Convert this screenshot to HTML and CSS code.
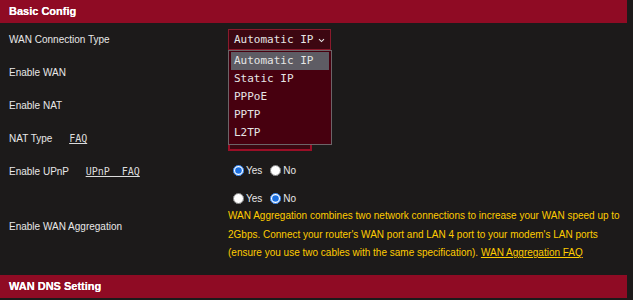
FILE: index.html
```html
<!DOCTYPE html>
<html>
<head>
<meta charset="utf-8">
<link rel="stylesheet" href="styles.css">
</head>
<body>
<div class="panel">
  <div class="section-head">Basic Config</div>
  <table class="form">
    <tr class="row">
      <th>WAN Connection Type</th>
      <td>
        <div class="select-wrap">
          <div class="select">
            <span class="sel-text">Automatic IP</span>
            <svg class="chev" width="7" height="5" viewBox="0 0 7 5"><path d="M1 1.2 L3.5 3.6 L6 1.2" fill="none" stroke="#e6e6e6" stroke-width="1.1"/></svg>
          </div>
          <ul class="dropdown">
            <li class="active">Automatic IP</li>
            <li>Static IP</li>
            <li>PPPoE</li>
            <li>PPTP</li>
            <li>L2TP</li>
          </ul>
        </div>
      </td>
    </tr>
    <tr class="row">
      <th>Enable WAN</th>
      <td></td>
    </tr>
    <tr class="row">
      <th>Enable NAT</th>
      <td></td>
    </tr>
    <tr class="row">
      <th>NAT Type <a class="faq">FAQ</a></th>
      <td><div class="natbox"></div></td>
    </tr>
    <tr class="row">
      <th>Enable UPnP <a class="faq">UPnP&nbsp;&nbsp;FAQ</a></th>
      <td><label class="radio"><input type="radio" name="upnp" checked>Yes</label><label class="radio"><input type="radio" name="upnp">No</label></td>
    </tr>
    <tr class="row agg">
      <th>Enable WAN Aggregation</th>
      <td>
        <div class="radios"><label class="radio"><input type="radio" name="agg">Yes</label><label class="radio"><input type="radio" name="agg" checked>No</label></div>
        <div class="hint"><span>WAN Aggregation combines two network connections to increase your WAN speed up to 2Gbps. Connect your router's WAN port and LAN 4 port to your modem's LAN ports (ensure you use two cables with the same specification).</span> <a class="hint-link">WAN Aggregation FAQ</a></div>
      </td>
    </tr>
  </table>
  <div class="section-head second">WAN DNS Setting</div>
</div>
</body>
</html>
```
FILE: styles.css
```css
html, body {
  margin: 0;
  padding: 0;
  background: #1c1a1a;
}
body {
  font-family: "Liberation Sans", Arial, sans-serif;
  color: #e4e4e4;
  width: 633px;
  height: 300px;
  overflow: hidden;
}
.panel {
  width: 627px;
}
.section-head {
  height: 23px;
  line-height: 23px;
  background: #8f0b24;
  color: #ffffff;
  font-weight: bold;
  font-size: 11px;
  padding-left: 9px;
  text-shadow: 0 0 0.6px #fff;
}
.section-head.second {
  margin-top: 10px;
}
.form {
  width: 100%;
  border-collapse: collapse;
}
.row {
  height: 33px;
}
.row th {
  width: 219px;
  padding: 0 0 0 9px;
  text-align: left;
  font-weight: normal;
  font-size: 10px;
  color: #e8e8e8;
  vertical-align: middle;
}
.row td {
  padding: 0;
  vertical-align: middle;
  font-size: 10px;
}
.faq {
  font-family: "DejaVu Sans Mono", monospace;
  font-size: 10px;
  color: #dcdcdc;
  text-decoration: underline;
  margin-left: 14px;
}
.select-wrap {
  position: relative;
  width: 103px;
}
.select {
  height: 21px;
  box-sizing: border-box;
  border: 1px solid #8a1a2c;
  background: #3c0711;
  display: flex;
  align-items: center;
  justify-content: space-between;
  padding: 0 5px 0 5px;
  font-family: "DejaVu Sans Mono", monospace;
  font-size: 11px;
  color: #e6e6e6;
}
.sel-text {
  white-space: nowrap;
}
.chev {
  display: block;
  flex: none;
  margin-top: 1px;
}
.dropdown {
  position: absolute;
  left: 0;
  top: 21px;
  width: 104px;
  box-sizing: border-box;
  margin: 0;
  padding: 1px 2px 2px 2px;
  list-style: none;
  background: #47000f;
  border: 1px solid #6c6468;
  z-index: 5;
  font-family: "DejaVu Sans Mono", monospace;
  font-size: 11px;
  color: #e6e6e6;
}
.dropdown li {
  height: 18px;
  line-height: 18px;
  padding-left: 3px;
  white-space: nowrap;
}
.dropdown li.active {
  background: #5e5c64;
}
.natbox {
  width: 84px;
  height: 19px;
  margin-top: 5px;
  box-sizing: border-box;
  border: 2px solid #9a0f27;
  background: #3c0711;
}
.radio {
  display: inline-flex;
  align-items: center;
  margin-right: 3px;
  color: #e8e8e8;
  font-size: 10px;
}
.radio input {
  width: 11px;
  height: 11px;
  margin: 0 2px 0 5px;
  accent-color: #1a6fe0;
}
.agg {
  height: 77px;
}
.radios {
  height: 17px;
  display: flex;
  align-items: center;
}
.hint {
  color: #ffcc00;
  font-size: 10px;
  line-height: 18.5px;
  padding-right: 2px;
}
.hint-link {
  text-decoration: underline;
}
```
